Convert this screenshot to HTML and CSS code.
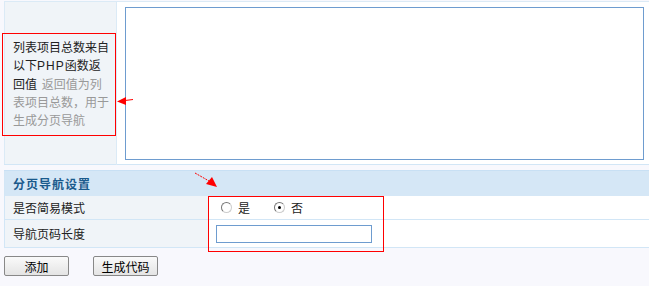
FILE: index.html
```html
<!DOCTYPE html>
<html lang="zh-CN">
<head>
  <meta charset="UTF-8" />
  <title>分页导航设置</title>
  <link rel="stylesheet" href="styles.css">
</head>
<body>
<div class="page">

  <table class="form-top">
    <tr>
      <td class="label">
        列表项目总数来自以下<span class="latin">PHP</span>函数返回值 <span class="tip">返回值为列表项目总数，用于生成分页导航</span>
      </td>
      <td class="field">
        <textarea class="code"></textarea>
      </td>
    </tr>
  </table>

  <table class="form-nav">
    <tr>
      <th colspan="2">分页导航设置</th>
    </tr>
    <tr class="row-mode">
      <td class="label">是否简易模式</td>
      <td class="field">
        <div class="choices">
          <span class="radio"></span><span class="opt">是</span>
          <span class="radio checked"></span><span class="opt">否</span>
        </div>
      </td>
    </tr>
    <tr class="row-len">
      <td class="label">导航页码长度</td>
      <td class="field"><input type="text" class="text"></td>
    </tr>
  </table>

  <div class="actions">
    <button class="btn">添加</button>
    <button class="btn">生成代码</button>
  </div>

  <!-- annotations -->
  <div class="mark mark-tip"></div>
  <div class="mark mark-nav"></div>
  <svg class="arrow arrow-tip" width="20" height="12" viewBox="0 0 20 12">
    <line x1="8" y1="5.5" x2="16" y2="4.5" stroke="#f00" stroke-width="1"/>
    <polygon points="0,6.5 9,2 9,10" fill="#f00"/>
  </svg>
  <svg class="arrow arrow-nav" width="26" height="18" viewBox="0 0 26 18">
    <line x1="1" y1="1" x2="15" y2="9" stroke="#f00" stroke-width="1" stroke-dasharray="2 1"/>
    <polygon points="23,15 12,12 18,5" fill="#f00"/>
  </svg>

</div>
</body>
</html>
```

FILE: styles.css
```css
body {
  margin: 0;
  background: #f8f8fd;
  font-family: "Noto Sans CJK SC", "Liberation Sans", sans-serif;
  font-size: 12px;
  color: #222;
  overflow: hidden;
}
.page {
  position: relative;
  padding: 1px 0 0 4px;
  width: 660px;
}
table {
  border-collapse: collapse;
  width: 650px;
}
td, th {
  padding: 0;
}
.form-top {
  border-top: 1px solid #dbeaf6;
  border-left: 1px solid #dbeaf6;
  border-bottom: 1px solid #d2e6f6;
  background: #fff;
}
.form-top .label {
  width: 96px;
  padding: 0 7px 0 8px;
  background: #f0f4f8;
  border-right: 1px solid #dbeaf6;
  line-height: 18px;
  vertical-align: middle;
  height: 162px;
}
.latin {
  font-family: "Liberation Sans", sans-serif;
  letter-spacing: 1px;
  color: #222;
}
.tip {
  color: #999;
  margin-left: 2px;
}
.form-top .field {
  padding: 5px 0 3px 8px;
  vertical-align: top;
}
.code {
  display: block;
  width: 517px;
  height: 151px;
  margin: 0;
  padding: 0;
  border: 1px solid #6e9ccf;
  background: #fff;
  resize: none;
}
.form-nav {
  margin-top: 5px;
  border-left: 1px solid #d2e6f6;
  background: #fff;
}
.form-nav th {
  height: 25px;
  padding-left: 8px;
  text-align: left;
  background: #d5e7f6;
  border-top: 1px solid #c8e0f4;
  color: #1a5a8c;
  font-weight: bold;
  font-size: 12px;
  letter-spacing: 1px;
}
.form-nav td {
  border-bottom: 1px solid #d2e6f6;
}
.form-nav .label {
  width: 195px;
  padding-left: 8px;
  background: #f0f4f8;
}
.row-mode td {
  height: 23px;
}
.row-len td {
  height: 27px;
}
.form-nav .field {
  padding-left: 8px;
}
.choices {
  display: flex;
  align-items: center;
}
.radio {
  width: 9px;
  height: 9px;
  border: 1px solid #777;
  border-right-color: #ccc;
  border-bottom-color: #ccc;
  border-radius: 50%;
  background: #fff;
  margin-left: 5px;
  position: relative;
}
.radio.checked::after {
  content: "";
  position: absolute;
  left: 3px;
  top: 3px;
  width: 3px;
  height: 3px;
  background: #000;
  border-radius: 50%;
}
.opt {
  margin-left: 6px;
  margin-right: 19px;
}
.text {
  display: block;
  width: 154px;
  height: 16px;
  margin: 0;
  padding: 0;
  border: 1px solid #6e9ccf;
  background: #fff;
}
.actions {
  margin-top: 8px;
  display: flex;
  gap: 24px;
}
.btn {
  width: 65px;
  height: 20px;
  padding: 0;
  font-family: inherit;
  font-size: 12px;
  color: #000;
  background: linear-gradient(#fafafa, #e4e4e4);
  border: 1px solid #888;
  border-radius: 2px;
}
.mark {
  position: absolute;
  z-index: 2;
  border: 1px solid #f00;
  pointer-events: none;
}
.mark-tip {
  left: 2px;
  top: 33px;
  width: 112px;
  height: 101px;
}
.mark-nav {
  left: 208px;
  top: 196px;
  width: 174px;
  height: 54px;
}
.arrow {
  position: absolute;
  z-index: 2;
}
.arrow-tip {
  left: 117px;
  top: 95px;
}
.arrow-nav {
  left: 194px;
  top: 172px;
}
```
